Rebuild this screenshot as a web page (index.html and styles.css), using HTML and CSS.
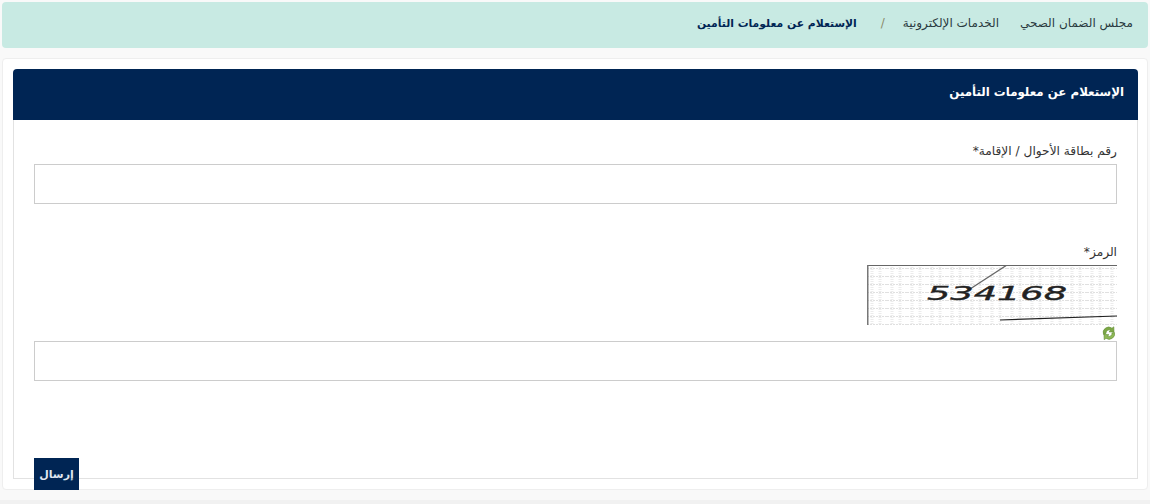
FILE: index.html
```html
<!DOCTYPE html>
<html lang="ar" dir="rtl">
<head>
<meta charset="utf-8">
<title>الإستعلام عن معلومات التأمين</title>
<link rel="stylesheet" href="styles.css">
</head>
<body>
<nav class="crumbs">
  <span class="crumb">مجلس الضمان الصحي</span>
  <span class="crumb crumb-second">الخدمات الإلكترونية</span>
  <span class="sep">/</span>
  <strong class="crumb-current">الإستعلام عن معلومات التأمين</strong>
</nav>
<main class="card">
  <div class="panel">
    <h1 class="panel-head">الإستعلام عن معلومات التأمين</h1>
    <form class="panel-body">
      <label class="label">رقم بطاقة الأحوال / الإقامة*</label>
      <input class="field" type="text">
      <label class="label label-code">الرمز*</label>
      <svg class="captcha" viewBox="0 0 250 60" width="250" height="60">
        <defs>
          <pattern id="dots" width="20" height="8" patternUnits="userSpaceOnUse">
            <rect width="20" height="8" fill="#fff"/>
            <path d="M0 3.5H20" stroke="#e0e0e0" stroke-dasharray="2 1"/>
            <path d="M5 0V8M13 0V8" stroke="#ececec" stroke-width="3" stroke-dasharray="1 1"/>
          </pattern>
        </defs>
        <rect width="250" height="60" fill="url(#dots)"/>
        <path d="M0 .5H250" stroke="#666"/>
        <path d="M.75 0V60" stroke="#777" stroke-width="1.5"/>
        <path d="M100 26L140 0" stroke="#666" stroke-width="1.3"/>
        <path d="M133 55L250 51" stroke="#222" stroke-width="1.2"/>
        <text class="captcha-text" x="60" y="35" textLength="140" lengthAdjust="spacingAndGlyphs" direction="ltr">534168</text>
      </svg>
      <div class="refresh-row">
        <svg class="refresh" viewBox="0 0 16 16" width="16" height="16">
          <path d="M2.500 9.500A5.500 5.500 0 0 1 11 3.200L12.800 1.800 13 7.200 8 6.800 9.700 5.300A3.200 3.200 0 0 0 5 8.500Z" fill="#7da846" stroke="#5f8b32" stroke-width=".6"/>
          <path d="M13.500 7.500A5.500 5.500 0 0 1 5 13.300L3.200 14.700 3 9.300 8 9.700 6.300 11.200A3.200 3.200 0 0 0 11 8Z" fill="#8fb957" stroke="#5f8b32" stroke-width=".6"/>
        </svg>
      </div>
      <input class="field field-code" type="text">
      <div class="actions"><button class="submit" type="button">إرسال</button></div>
    </form>
  </div>
</main>
<div class="page-foot"></div>
</body>
</html>
```
FILE: styles.css
```css
* { box-sizing: border-box; }
html, body { height: 504px; overflow: hidden; }
body {
  margin: 0;
  padding: 2px 2px 0 2px;
  background: #f9f9f9;
  color: #333;
  font-family: "DejaVu Sans", "Noto Sans", sans-serif;
}
.crumbs {
  height: 46px;
  display: flex;
  align-items: center;
  padding: 0 15px 4px 0;
  background: #c8eae3;
  border-radius: 4px;
  font-size: 12px;
  color: #2a3a40;
}
.crumb-second { margin-right: 21px; }
.sep { margin: 0 18px 0 24px; color: #8a8a6a; }
.crumb-current { color: #002554; font-size: 10.8px; }
.card {
  margin-top: 10px;
  height: 432px;
  background: #fff;
  border: 1px solid #eeeeee;
  border-radius: 4px;
  padding: 10px 9px 0 10px;
}
.panel { height: 410px; display: flex; flex-direction: column; }
.panel-head {
  flex: none;
  height: 51px;
  margin: 0;
  padding: 0 14px 5px 0;
  display: flex;
  align-items: center;
  background: #002554;
  color: #fff;
  border-radius: 4px 4px 0 0;
  font-size: 11.8px;
  font-weight: 700;
}
.panel-body {
  flex: 1;
  min-height: 0;
  display: flex;
  flex-direction: column;
  padding: 0 20px;
  border: 1px solid #e2e2e2;
  border-top: 0;
}
.label {
  display: block;
  flex: none;
  height: 20px;
  margin-top: 24px;
  font-size: 12.2px;
  line-height: 14px;
  color: #333;
}
.label-code { margin-top: 41px; }
.field {
  display: block;
  width: 100%;
  height: 40px;
  flex: none;
  background: #fff;
  border: 1px solid #cccccc;
  border-radius: 0;
  padding: 0 8px;
}
.captcha { display: block; flex: none; }
.refresh-row { flex: none; height: 16px; }
.refresh { display: block; }
.captcha-text {
  font-family: "DejaVu Sans", sans-serif;
  font-size: 20px;
  font-style: italic;
  font-weight: 400;
  fill: #222;
  stroke: #222;
  stroke-width: .4px;
}
.actions {
  flex: none;
  display: flex;
  justify-content: flex-end;
  margin-top: 77px;
}
.submit {
  width: 45px;
  height: 32px;
  padding: 0;
  border: 0;
  background: #002554;
  color: #dfe6f0;
  font-family: inherit;
  font-size: 11px;
  font-weight: 700;
}
.page-foot {
  height: 10px;
  margin: 10px -2px 0;
  background: #f1f1f1;
}
```
